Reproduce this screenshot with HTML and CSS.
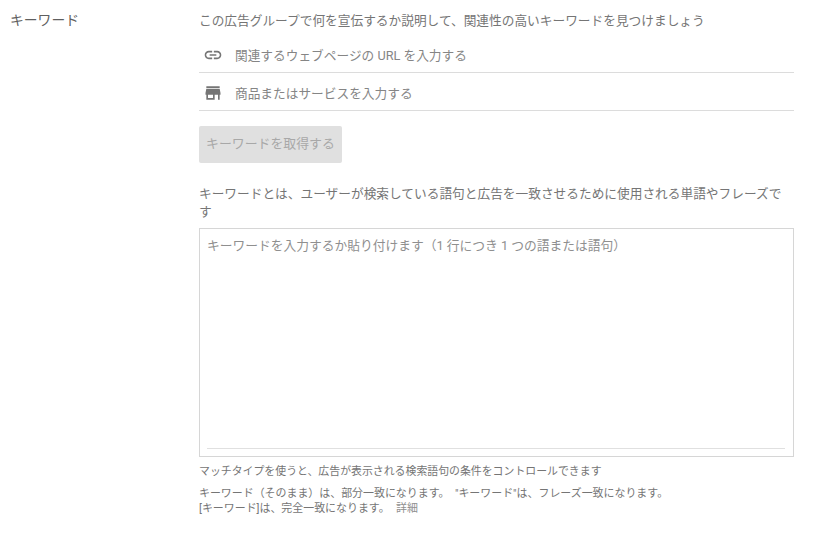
FILE: index.html
```html
<!DOCTYPE html>
<html lang="ja">
<head>
    <meta charset="UTF-8">
    <title>キーワード</title>
    <link rel="stylesheet" href="styles.css">
</head>
<body>
    <div class="section">
        <div class="section-title">キーワード</div>
        <div class="section-body">
            <div class="intro">この広告グループで何を宣伝するか説明して、関連性の高いキーワードを見つけましょう</div>

            <div class="seed-row">
                <svg class="seed-icon" viewBox="0 0 24 24"><path d="M3.9 12c0-1.71 1.39-3.1 3.1-3.1h4V7H7c-2.76 0-5 2.24-5 5s2.24 5 5 5h4v-1.9H7c-1.71 0-3.1-1.39-3.1-3.1zM8 13h8v-2H8v2zm9-6h-4v1.9h4c1.71 0 3.1 1.39 3.1 3.1s-1.39 3.1-3.1 3.1h-4V17h4c2.76 0 5-2.24 5-5s-2.24-5-5-5z"/></svg>
                <span class="seed-text">関連するウェブページの URL を入力する</span>
            </div>
            <div class="seed-row">
                <svg class="seed-icon" viewBox="0 0 24 24"><path d="M20 4H4v2h16V4zm1 10v-2l-1-5H4l-1 5v2h1v6h10v-6h4v6h2v-6h1zm-9 4H6v-4h6v4z"/></svg>
                <span class="seed-text">商品またはサービスを入力する</span>
            </div>

            <button class="get-button" disabled>キーワードを取得する</button>

            <div class="explain">キーワードとは、ユーザーが検索している語句と広告を一致させるために使用される単語やフレーズです</div>

            <div class="keyword-box">
                <div class="placeholder">キーワードを入力するか貼り付けます（1 行につき 1 つの語または語句）</div>
                <div class="box-line"></div>
            </div>

            <div class="note">マッチタイプを使うと、広告が表示される検索語句の条件をコントロールできます</div>
            <div class="note-match">キーワード（そのまま）は、部分一致になります。 &nbsp;"キーワード"は、フレーズ一致になります。<br>[キーワード]は、完全一致になります。 &nbsp;<span class="more">詳細</span></div>
        </div>
    </div>
</body>
</html>
```

FILE: styles.css
```css
body {
    margin: 0;
    background: #fff;
    font-family: Roboto, "Noto Sans CJK JP", sans-serif;
    color: #757575;
    overflow: hidden;
}

.section {
    display: flex;
    padding: 12px 34px 0 10px;
}

.section-title {
    width: 189px;
    flex-shrink: 0;
    font-size: 13.8px;
    line-height: 17px;
    color: #5f5f5f;
}

.section-body {
    flex: 1;
}

.intro {
    font-size: 12.7px;
    line-height: 17px;
    margin-bottom: 6px;
}

.seed-row {
    display: flex;
    align-items: center;
    box-sizing: border-box;
    height: 38px;
    padding-top: 2px;
    border-bottom: 1px solid #dcdcdc;
}

.seed-icon {
    width: 20px;
    height: 20px;
    margin-left: 4px;
    margin-right: 12px;
    fill: #757575;
}

.seed-text {
    font-size: 12.7px;
    color: #858585;
}

.get-button {
    display: block;
    width: 143px;
    height: 37px;
    margin-top: 15px;
    padding: 0 7px 4px;
    border: 0;
    border-radius: 2px;
    background: #e0e0e0;
    color: #a8a8a8;
    font-family: inherit;
    font-size: 12.9px;
    text-align: left;
}

.explain {
    margin-top: 22px;
    padding-right: 5px;
    font-size: 12.7px;
    line-height: 18px;
}

.keyword-box {
    display: flex;
    flex-direction: column;
    justify-content: space-between;
    box-sizing: border-box;
    height: 229px;
    margin-top: 7px;
    padding: 8px 8px 7px 7px;
    border: 1px solid #d6d6d6;
}

.placeholder {
    font-size: 12.75px;
    line-height: 17px;
    color: #8f8f8f;
}

.box-line {
    border-top: 1px solid #e0e0e0;
}

.note {
    margin-top: 7px;
    font-size: 10.9px;
    line-height: 15px;
}

.note-match {
    margin-top: 7px;
    font-size: 10.95px;
    line-height: 15px;
}

.more {
    margin-left: 1px;
    color: #8f8f8f;
}
```
